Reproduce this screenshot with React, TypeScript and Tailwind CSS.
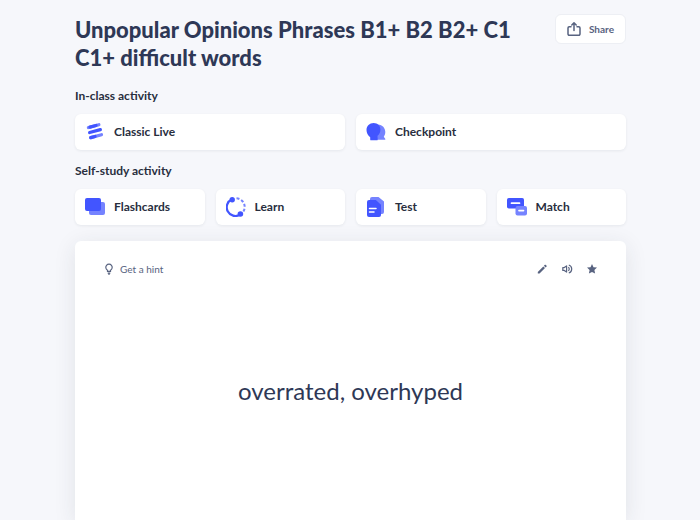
import type { ReactNode } from "react";

type Activity = { label: string; icon: ReactNode };

const ClassicLiveIcon = () => (
    <svg width="20" height="20" viewBox="0 0 20 20" fill="none" strokeWidth="3.2" strokeLinecap="round" aria-hidden="true">
        <path d="M3.4 5.5L13.9 2.7" stroke="#7583ff" />
        <path d="M5 5.1L11 3.5" stroke="#4255ff" />
        <path d="M4.6 10.5L15.4 7.6" stroke="#4255ff" />
        <path d="M5.7 15.6L16.5 12.7" stroke="#7583ff" />
        <path d="M5.7 15.6L10 14.45" stroke="#4255ff" />
    </svg>
);

const CheckpointIcon = () => (
    <svg width="20" height="20" viewBox="0 0 20 20" aria-hidden="true">
        <path fill="#7583ff" d="M12 2.5c4.4.3 7.3 3.4 7.3 7.5 0 2.2-.8 3.7-1.5 4.7l1.6 2.3c.1.4-.1.7-.5.7H11z" />
        <path fill="#4255ff" d="M7.6.9C11.7.9 14.4 3.7 14.4 7.6c0 2.7-1 4.7-2.7 6.2v3.6c0 .5-.3.9-.8.9H5c-.5 0-.8-.4-.8-.9v-2.2C1.8 13.4.5 10.8.5 8 .5 3.8 3.5.9 7.6.9z" />
    </svg>
);

const FlashcardsIcon = () => (
    <svg width="20" height="20" viewBox="0 0 20 20" aria-hidden="true">
        <rect x="4" y="5" width="16" height="13" rx="2" fill="#7583ff" />
        <rect x="0" y="1" width="16" height="13" rx="2" fill="#4255ff" />
    </svg>
);

const LearnIcon = () => (
    <svg width="20" height="20" viewBox="0 0 20 20" fill="none" aria-hidden="true">
        <path d="M6 2.3A8.7 8.7 0 1 0 14 17.7" stroke="#4255ff" strokeWidth="2.2" />
        <path d="M10.5 1.3A8.7 8.7 0 0 1 17.1 15" stroke="#7583ff" strokeWidth="2" strokeDasharray="3 1.9" />
        <circle cx="6.2" cy="2.8" r="2.7" fill="#4255ff" />
        <circle cx="14.4" cy="17" r="2.8" fill="#4255ff" />
    </svg>
);

const TestIcon = () => (
    <svg width="20" height="20" viewBox="0 0 20 20" aria-hidden="true">
        <path fill="#7583ff" d="M6 0h6.5L18 4.5V15a2 2 0 0 1-2 2H4V2a2 2 0 0 1 2-2z" />
        <path fill="#4255ff" d="M3 3h6.8L15 7.8V18a2 2 0 0 1-2 2H3a2 2 0 0 1-2-2V5a2 2 0 0 1 2-2z" />
        <path d="M3.5 11.5h6.5M3.5 15h4.5" stroke="#fff" strokeWidth="1.5" strokeLinecap="round" />
    </svg>
);

const MatchIcon = () => (
    <svg width="20" height="20" viewBox="0 0 20 20" aria-hidden="true">
        <rect x="0" y="1" width="17" height="10.5" rx="1.8" fill="#4255ff" />
        <rect x="8.5" y="9" width="11.5" height="9.5" rx="2" fill="#7583ff" />
        <path d="M4.5 6.2h8M12 13.6h4.5" stroke="#fff" strokeWidth="1.7" strokeLinecap="round" />
    </svg>
);

const inClass: Activity[] = [
    { label: "Classic Live", icon: <ClassicLiveIcon /> },
    { label: "Checkpoint", icon: <CheckpointIcon /> },
];

const selfStudy: Activity[] = [
    { label: "Flashcards", icon: <FlashcardsIcon /> },
    { label: "Learn", icon: <LearnIcon /> },
    { label: "Test", icon: <TestIcon /> },
    { label: "Match", icon: <MatchIcon /> },
];

function ActivityCard({ label, icon }: Activity) {
    return (
        <a
            href="#"
            className="flex h-9 items-center gap-[9px] rounded-md bg-white px-[10px] text-xs leading-4 font-bold text-[#282e3e] shadow-[0_1px_3px_rgba(40,46,62,0.08)]"
        >
            {icon}
            {label}
        </a>
    );
}

export default function App() {
    return (
        <main className="flex min-h-screen flex-col overflow-x-hidden bg-[#f6f7fb] pt-[14px] pr-[74px] pl-[75px] font-['Lato','Liberation_Sans',sans-serif] text-[#2e3856]">
            <header className="flex items-start justify-between gap-6">
                <h1 className="pt-[2px] text-[22px] leading-7 font-black">
                    Unpopular Opinions Phrases B1+ B2 B2+ C1 C1+ difficult words
                </h1>
                <button
                    type="button"
                    className="flex h-[30px] shrink-0 items-center gap-2 rounded-md border border-[#edeff4] bg-white px-[11px] text-[10px] font-bold text-[#586380]"
                >
                    <svg width="14" height="14" viewBox="0 0 14 14" fill="none" stroke="currentColor" strokeWidth="1.5" strokeLinecap="round" strokeLinejoin="round" aria-hidden="true">
                        <path d="M4 4.8H2.2a1.2 1.2 0 0 0-1.2 1.2V12a1.2 1.2 0 0 0 1.2 1.2h9.6A1.2 1.2 0 0 0 13 12V6a1.2 1.2 0 0 0-1.2-1.2H10" />
                        <path d="M7 8.5V.8M4.8 3L7 .8 9.2 3" />
                    </svg>
                    Share
                </button>
            </header>

            <section className="mt-4">
                <h2 className="text-xs leading-4 font-bold text-[#282e3e]">In-class activity</h2>
                <div className="mt-[10px] grid grid-cols-2 gap-[11px]">
                    {inClass.map((activity) => (
                        <ActivityCard key={activity.label} {...activity} />
                    ))}
                </div>
            </section>

            <section className="mt-[13px]">
                <h2 className="text-xs leading-4 font-bold text-[#282e3e]">Self-study activity</h2>
                <div className="mt-[10px] grid grid-cols-4 gap-[11px]">
                    {selfStudy.map((activity) => (
                        <ActivityCard key={activity.label} {...activity} />
                    ))}
                </div>
            </section>

            {/* Flashcard */}
            <section className="mt-4 grow rounded-t-md bg-white px-7 pt-5 pb-28 shadow-[0_4px_22px_rgba(40,46,62,0.1)]">
                <div className="flex h-4 items-center justify-between text-[#586380]">
                    <button type="button" className="flex items-center gap-[5px] text-[10px] leading-4">
                        <svg width="12" height="12" viewBox="0 0 12 12" fill="none" stroke="currentColor" strokeWidth="1.2" aria-hidden="true">
                            <path d="M4.5 8.3V7.2A3.2 3.2 0 1 1 7.5 7.2V8.3z" />
                            <path d="M4.7 10.2h2.6M5.4 11.3h1.2" />
                        </svg>
                        Get a hint
                    </button>
                    <div className="flex items-center gap-[13px]">
                        <button type="button" aria-label="Edit">
                            <svg width="12" height="12" viewBox="0 0 12 12" fill="currentColor" aria-hidden="true">
                                <path d="M1.8 8.9v1.7h1.7L9 5.1 7.3 3.4zM9.6 4.5l1-1a.5.5 0 0 0 0-.7l-1-1a.5.5 0 0 0-.7 0l-1 1z" />
                            </svg>
                        </button>
                        <button type="button" aria-label="Play audio">
                            <svg width="12" height="12" viewBox="0 0 12 12" fill="none" stroke="currentColor" strokeWidth="1.2" strokeLinejoin="round" aria-hidden="true">
                                <path d="M1.8 4.6h1.5L5.6 2.9v6.2L3.3 7.4H1.8z" />
                                <path d="M7.3 4.2a2.2 2.2 0 0 1 0 3.6M7.8 2a4.2 4.2 0 0 1 0 8" />
                            </svg>
                        </button>
                        <button type="button" aria-label="Star">
                            <svg width="12" height="12" viewBox="0 0 12 12" fill="currentColor" aria-hidden="true">
                                <path d="M6 1l1.5 3.2 3.5.4-2.6 2.4.7 3.6L6 8.9l-3.1 1.7.7-3.6L1 4.6l3.5-.4z" />
                            </svg>
                        </button>
                    </div>
                </div>
                <p className="mt-[98px] text-center text-2xl leading-8">overrated, overhyped</p>
            </section>
        </main>
    );
}
